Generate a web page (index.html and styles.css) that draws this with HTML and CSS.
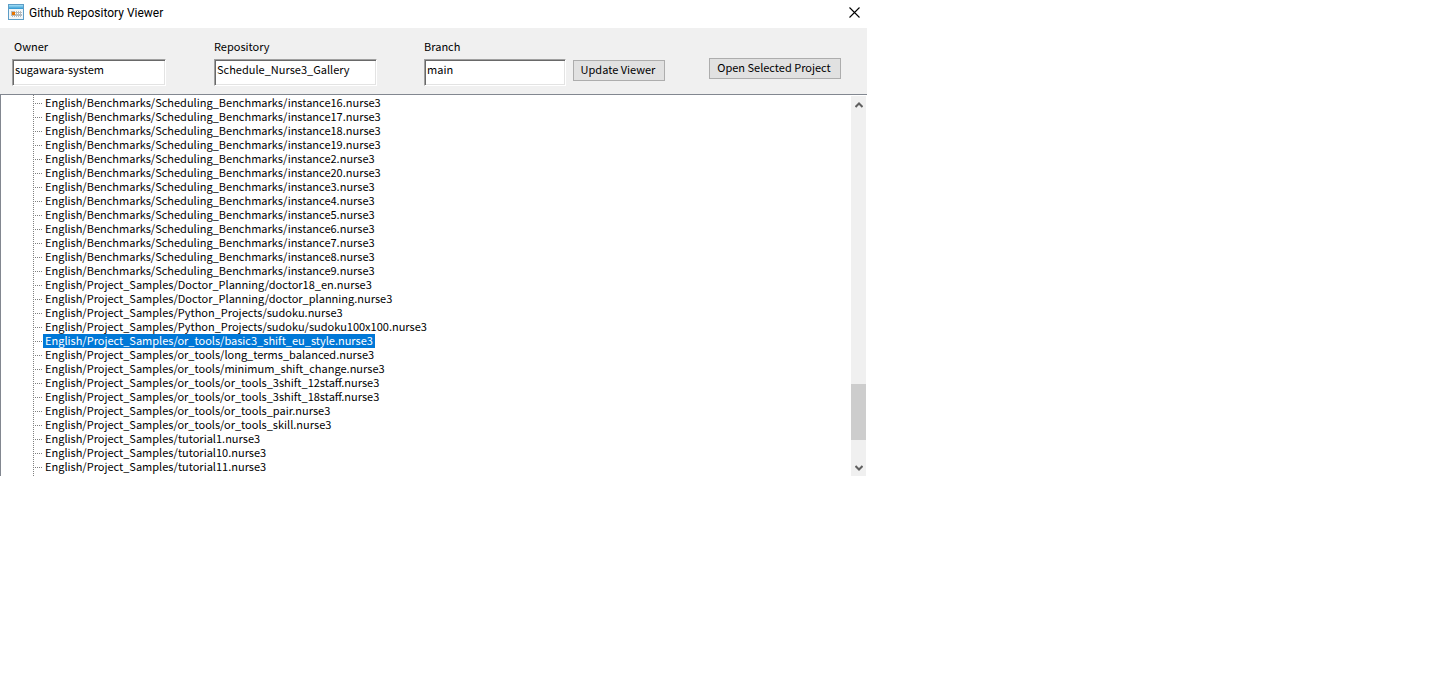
FILE: index.html
```html
<!DOCTYPE html>
<html lang="en">
<head>
  <meta charset="UTF-8" />
  <meta name="viewport" content="width=device-width, initial-scale=1.0"/>
  <title>Github Repository Viewer</title>
  <link rel="stylesheet" href="styles.css">
</head>
<body>
  <div class="window">
    <header class="titlebar">
      <svg class="app-icon" width="16" height="16" viewBox="0 0 16 16" aria-hidden="true">
        <defs>
          <linearGradient id="sky" x1="0" y1="0" x2="0" y2="1">
            <stop offset="0" stop-color="#a5e0f7"/>
            <stop offset="1" stop-color="#2b94cf"/>
          </linearGradient>
        </defs>
        <rect x="0" y="0" width="16" height="16" fill="#5d9dc6"/>
        <rect x="1" y="1" width="14" height="4" fill="url(#sky)"/>
        <rect x="1" y="5" width="14" height="10" fill="#f1f5f7"/>
        <path d="M3 7h11v6H3z" fill="#b5babd"/>
        <path d="M7 7h1v1H7zM9 7h1v1H9zM11 7h1v1h-1zM13 7h1v1h-1zM7 9h1v1H7zM9 9h1v1H9zM11 9h1v1h-1zM13 9h1v1h-1zM3 12h1v1H3zM5 12h1v1H5zM7 12h1v1H7zM9 12h1v1H9zM11 12h1v1h-1zM13 12h1v1h-1z" fill="#fff"/>
        <rect x="4" y="8" width="3" height="3" fill="#e87400"/>
      </svg>
      <h1>Github Repository Viewer</h1>
      <button class="close" type="button" aria-label="Close">
        <svg width="11" height="11" viewBox="0 0 11 11"><path d="M.5.5l10 10M10.5.5l-10 10" fill="none" stroke="#000" stroke-width="1.1"/></svg>
      </button>
    </header>

    <form class="toolbar">
      <div class="field owner">
        <label for="owner">Owner</label>
        <input id="owner" type="text" value="sugawara-system">
      </div>
      <div class="field repository">
        <label for="repository">Repository</label>
        <input id="repository" type="text" value="Schedule_Nurse3_Gallery">
      </div>
      <div class="field branch">
        <label for="branch">Branch</label>
        <input id="branch" type="text" value="main">
      </div>
      <button class="update" type="button">Update Viewer</button>
      <button class="open" type="button">Open Selected Project</button>
    </form>

    <main class="viewer">
      <ul class="tree">
        <li><span>English/Benchmarks/Scheduling_Benchmarks/instance16.nurse3</span></li>
        <li><span>English/Benchmarks/Scheduling_Benchmarks/instance17.nurse3</span></li>
        <li><span>English/Benchmarks/Scheduling_Benchmarks/instance18.nurse3</span></li>
        <li><span>English/Benchmarks/Scheduling_Benchmarks/instance19.nurse3</span></li>
        <li><span>English/Benchmarks/Scheduling_Benchmarks/instance2.nurse3</span></li>
        <li><span>English/Benchmarks/Scheduling_Benchmarks/instance20.nurse3</span></li>
        <li><span>English/Benchmarks/Scheduling_Benchmarks/instance3.nurse3</span></li>
        <li><span>English/Benchmarks/Scheduling_Benchmarks/instance4.nurse3</span></li>
        <li><span>English/Benchmarks/Scheduling_Benchmarks/instance5.nurse3</span></li>
        <li><span>English/Benchmarks/Scheduling_Benchmarks/instance6.nurse3</span></li>
        <li><span>English/Benchmarks/Scheduling_Benchmarks/instance7.nurse3</span></li>
        <li><span>English/Benchmarks/Scheduling_Benchmarks/instance8.nurse3</span></li>
        <li><span>English/Benchmarks/Scheduling_Benchmarks/instance9.nurse3</span></li>
        <li><span>English/Project_Samples/Doctor_Planning/doctor18_en.nurse3</span></li>
        <li><span>English/Project_Samples/Doctor_Planning/doctor_planning.nurse3</span></li>
        <li><span>English/Project_Samples/Python_Projects/sudoku.nurse3</span></li>
        <li><span>English/Project_Samples/Python_Projects/sudoku/sudoku100x100.nurse3</span></li>
        <li><span class="selected">English/Project_Samples/or_tools/basic3_shift_eu_style.nurse3</span></li>
        <li><span>English/Project_Samples/or_tools/long_terms_balanced.nurse3</span></li>
        <li><span>English/Project_Samples/or_tools/minimum_shift_change.nurse3</span></li>
        <li><span>English/Project_Samples/or_tools/or_tools_3shift_12staff.nurse3</span></li>
        <li><span>English/Project_Samples/or_tools/or_tools_3shift_18staff.nurse3</span></li>
        <li><span>English/Project_Samples/or_tools/or_tools_pair.nurse3</span></li>
        <li><span>English/Project_Samples/or_tools/or_tools_skill.nurse3</span></li>
        <li><span>English/Project_Samples/tutorial1.nurse3</span></li>
        <li><span>English/Project_Samples/tutorial10.nurse3</span></li>
        <li><span>English/Project_Samples/tutorial11.nurse3</span></li>
      </ul>
      <div class="scrollbar">
        <button type="button" aria-label="Scroll up">
          <svg width="8" height="6" viewBox="0 0 8 6"><path d="M.5 5L4 1.500 7.500 5" fill="none" stroke="#606060" stroke-width="2"/></svg>
        </button>
        <div class="track"><div class="thumb"></div></div>
        <button type="button" aria-label="Scroll down">
          <svg width="8" height="6" viewBox="0 0 8 6"><path d="M.5 1L4 4.500 7.500 1" fill="none" stroke="#606060" stroke-width="2"/></svg>
        </button>
      </div>
    </main>
  </div>
</body>
</html>
```
FILE: styles.css
```css
* {
  box-sizing: border-box;
}

body {
  margin: 0;
  background: #fff;
  color: #000;
  font: 11px/12px "Noto Sans CJK JP", sans-serif;
}

button, input {
  font: inherit;
  color: inherit;
  border-radius: 0;
}

.window {
  max-width: 867px;
}

/* title bar */
.titlebar {
  display: flex;
  align-items: center;
  height: 28px;
  padding: 0 7px 4px 8px;
}

.titlebar h1 {
  flex: 1;
  margin: 2px 0 0 5px;
  font: 12px/16px Roboto, sans-serif;
}

.close {
  display: flex;
  padding: 0;
  border: 0;
  background: none;
}

/* toolbar */
.toolbar {
  display: flex;
  align-items: flex-start;
  padding: 12px 12px 8px;
  background: #f0f0f0;
}

.field {
  display: flex;
  flex-direction: column;
  gap: 7px;
}

.field input {
  width: 100%;
  height: 27px;
  padding: 0 1px 8px 2px;
  border: 1px solid;
  border-color: #a0a0a0 #fff #fff #a0a0a0;
  background: #fff;
  box-shadow: inset 1px 1px #696969, inset -1px -1px #e3e3e3;
  outline: 0;
}

.owner {
  width: 154px;
  margin-right: 48px;
}

.owner label {
  padding-left: 2px;
}

.repository {
  width: 163px;
  margin-right: 47px;
}

.branch {
  width: 142px;
  margin-right: 7px;
}

.toolbar button {
  height: 21px;
  padding: 0 2px 4px 0;
  border: 1px solid #adadad;
  background: #e1e1e1;
}

.toolbar .update {
  width: 92px;
  margin-top: 20px;
}

.toolbar .open {
  width: 132px;
  margin: 18px 14px 0 auto;
}

/* file tree */
.viewer {
  display: flex;
  border-top: 1px solid #828790;
  border-left: 1px solid #828790;
}

.tree {
  flex: 1;
  margin: 0 0 0 32px;
  padding: 1px 0 2px;
  list-style: none;
  background: repeating-linear-gradient(#808080 0 1px, #fff 1px 2px) 0 0 / 1px 100% no-repeat;
}

.tree li {
  display: flex;
  align-items: center;
  height: 14px;
}

.tree li::before {
  content: "";
  width: 9px;
  height: 1px;
  margin-right: 1px;
  background: repeating-linear-gradient(90deg, #808080 0 1px, #fff 1px 2px);
}

.tree span {
  padding: 0 2px 2px;
  white-space: nowrap;
}

.tree .selected {
  background: #0078d7;
  color: #fff;
}

/* scrollbar */
.scrollbar {
  display: flex;
  flex-direction: column;
  width: 15px;
  margin: 1px 1px 0 0;
  background: #f0f0f0;
}

.scrollbar button {
  display: flex;
  align-items: center;
  justify-content: center;
  height: 17px;
  padding: 0;
  border: 0;
  background: none;
}

.track {
  display: flex;
  flex: 1;
  flex-direction: column;
  justify-content: flex-end;
  padding-bottom: 19px;
}

.thumb {
  height: 56px;
  background: #cdcdcd;
}
```
